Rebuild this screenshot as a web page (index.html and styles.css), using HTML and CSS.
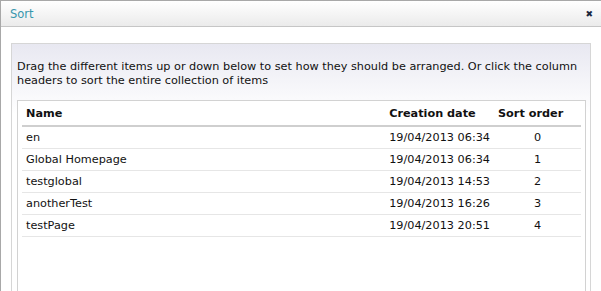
FILE: index.html
```html
<!DOCTYPE html>
<html lang="en">
<head>
  <meta charset="UTF-8" />
  <title>Sort</title>
  <link rel="stylesheet" href="styles.css">
</head>
<body>
  <div class="dialog">
    <header class="dialog-head">
      <span class="title">Sort</span>
      <span class="close">&#x2716;</span>
    </header>
    <div class="dialog-body">
      <div class="panel">
        <p class="hint">Drag the different items up or down below to set how they should be arranged. Or click the column headers to sort the entire collection of items</p>
        <div class="list">
          <table>
            <thead>
              <tr><th class="c-name">Name</th><th class="c-date">Creation date</th><th class="c-order">Sort order</th></tr>
            </thead>
            <tbody>
              <tr><td>en</td><td>19/04/2013 06:34</td><td class="num">0</td></tr>
              <tr><td>Global Homepage</td><td>19/04/2013 06:34</td><td class="num">1</td></tr>
              <tr><td>testglobal</td><td>19/04/2013 14:53</td><td class="num">2</td></tr>
              <tr><td>anotherTest</td><td>19/04/2013 16:26</td><td class="num">3</td></tr>
              <tr><td>testPage</td><td>19/04/2013 20:51</td><td class="num">4</td></tr>
            </tbody>
          </table>
        </div>
      </div>
    </div>
  </div>
</body>
</html>
```

FILE: styles.css
```css
body {
  margin: 0;
  font-family: "DejaVu Sans", Verdana, sans-serif;
  font-size: 11.25px;
  color: #111;
  background: #fff;
  overflow: hidden;
}
.dialog {
  width: 620px;
  height: 290px;
  overflow: hidden;
  border-top: 1px solid #a8a8a8;
  border-left: 1px solid #a8a8a8;
}
.dialog-head {
  display: flex;
  justify-content: space-between;
  align-items: center;
  height: 25px;
  padding: 0 0 0 9px;
  width: 591px;
  background: linear-gradient(#ffffff, #ebebeb);
  border-bottom: 1px solid #c6c6c6;
}
.title {
  color: #3797ad;
  font-size: 11.5px;
}
.close {
  font-size: 9px;
  color: #1a2740;
  font-weight: bold;
  margin-right: 8px;
}
.dialog-body {
  padding: 16px 0 0 10px;
}
.panel {
  width: 578px;
  height: 260px;
  border: 1px solid #d6d6d6;
  background: linear-gradient(#e8e8f1, #ffffff 70px);
}
.hint {
  margin: 16px 5px 0 5px;
  line-height: 14px;
}
.list {
  margin: 12px 0 0 5px;
  width: 559px;
  height: 200px;
  padding: 0 4px;
  border: 1px solid #d2d2d2;
  background: #fff;
}
table {
  width: 100%;
  border-collapse: collapse;
  white-space: nowrap;
}
th {
  text-align: left;
  font-weight: bold;
  height: 24px;
  padding: 0 4px;
  border-bottom: 2px solid #cfcfcf;
}
td {
  height: 21px;
  padding: 0 4px;
  border-bottom: 1px solid #e6e6e6;
}
.c-date {
  width: 98px;
}
.c-order {
  width: 79px;
}
td.num {
  text-align: center;
}
```
